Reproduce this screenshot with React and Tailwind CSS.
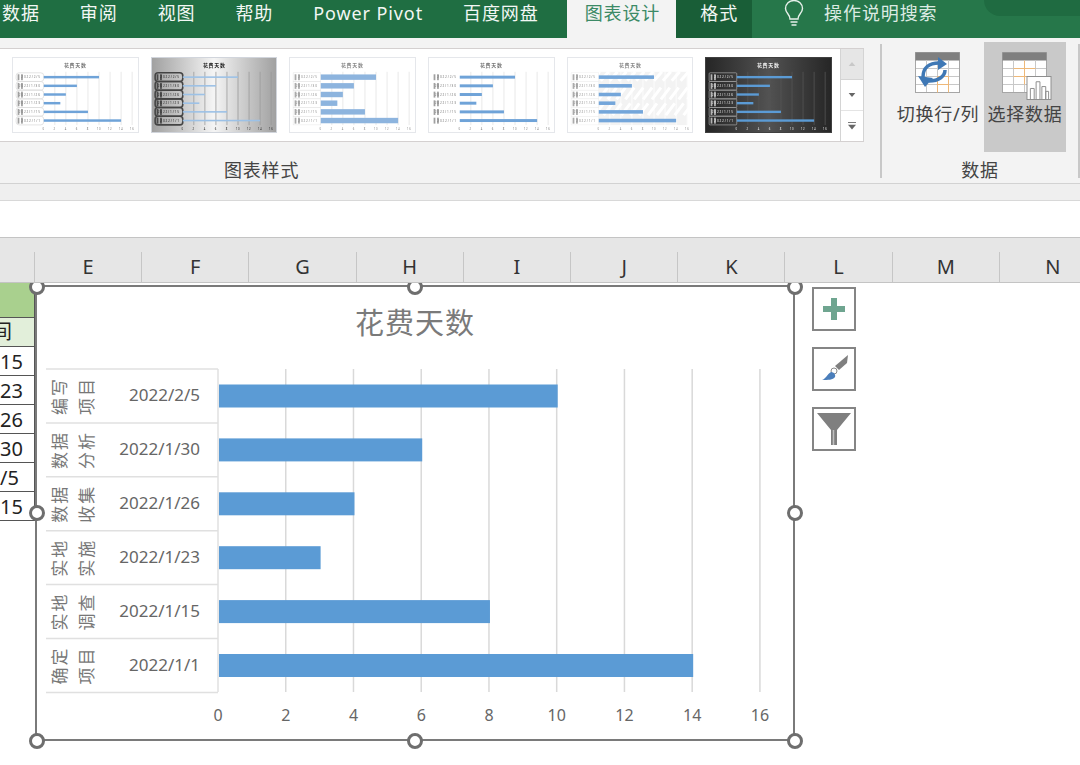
import React from "react";

const values = [10, 6, 4, 3, 8, 14];
const dates = ["2022/2/5", "2022/1/30", "2022/1/26", "2022/1/23", "2022/1/15", "2022/1/1"];
const cats = [
  ["编写", "项目"],
  ["数据", "分析"],
  ["数据", "收集"],
  ["实地", "实施"],
  ["实地", "调查"],
  ["确定", "项目"],
];
const columns = ["E", "F", "G", "H", "I", "J", "K", "L", "M", "N"];
const cells = ["15", "23", "26", "30", "/5", "15"];

const styles = [
  { box: "bg-white border-gray-200", bar: "#6fa3d8", h: 2.5, text: "#777", frame: "#ddd", grid: "#e3e3e3", lw: 0.8, rx: 3 },
  { box: "bg-linear-to-r from-neutral-400 via-neutral-100 to-neutral-400 border-gray-300", bar: "#9cc1e6", h: 1.6, text: "#222", frame: "#444", grid: "#999", lw: 1.6, rx: 3 },
  { box: "bg-white border-gray-200", bar: "#8db4de", h: 5.5, text: "#888", frame: "#e5e5e5", grid: "#e3e3e3", lw: 0.5, rx: 0 },
  { box: "bg-white border-gray-200", bar: "#6fa3d8", h: 3, text: "#777", frame: "#fff", grid: "#e3e3e3", lw: 0, rx: 0 },
  { box: "bg-white border-gray-200", bar: "#74a6da", h: 3.6, text: "#888", frame: "#eee", grid: "#fff", lw: 0.5, rx: 0, hatch: true },
  { box: "bg-linear-to-r from-neutral-800 via-neutral-600 to-neutral-800 border-neutral-700", bar: "#5b9bd5", h: 2.4, text: "#eee", frame: "#999", grid: "#555", lw: 0.8, rx: 1 },
];

function Thumb({ s }) {
  return (
    <div className={`flex-1 h-full border blur-[0.6px] ${s.box}`}>
      <svg viewBox="0 0 126 75" className="block w-full h-full">
        <text x="63" y="9" fontSize="5" fontWeight="700" textAnchor="middle" fill={s.text}>
          花费天数
        </text>
        {s.hatch && (
          <g>
            <rect x="31" y="14" width="90" height="54" fill="#f3f3f3" />
            {[0, 1, 2, 3, 4, 5, 6, 7, 8, 9, 10, 11].map((c) => (
              <path key={c} d={`M${32 + c * 9} 14l-8 9M${40 + c * 9} 30l-9 12M${36 + c * 9} 46l-9 12`} stroke="#fff" strokeWidth="3" />
            ))}
          </g>
        )}
        {[0, 1, 2, 3, 4, 5, 6, 7].map((g) => (
          <line key={g} x1={31 + (g + 1) * 11.2} x2={31 + (g + 1) * 11.2} y1="14" y2="68" stroke={s.grid} strokeWidth="0.8" />
        ))}
        {values.map((v, i) => (
          <g key={i}>
            <rect x="3" y={15 + i * 8.8} width="28" height="8.8" rx={s.rx} fill="none" stroke={s.frame} strokeWidth={s.lw} />
            <text x="28" y={20.5 + i * 8.8} fontSize="3.2" textAnchor="end" fill={s.text}>
              {dates[i]}
            </text>
            <rect x="4.5" y={16.5 + i * 8.8} width="1.8" height="6" fill={s.text} opacity="0.7" />
            <rect x="8" y={16.5 + i * 8.8} width="1.8" height="6" fill={s.text} opacity="0.7" />
            <rect x="31" y={19.4 - s.h / 2 + i * 8.8} width={v * 5.6} height={s.h} fill={s.bar} />
          </g>
        ))}
        {[0, 2, 4, 6, 8, 10, 12, 14, 16].map((t) => (
          <text key={t} x={31 + t * 5.6} y="72.5" fontSize="2.8" textAnchor="middle" fill={s.text}>
            {t}
          </text>
        ))}
      </svg>
    </div>
  );
}

function GridIcon({ swap }) {
  return (
    <svg viewBox="0 0 46 42" className={swap ? "w-11.5 h-10.5" : "w-full h-full"}>
      <rect x="0.5" y="0.5" width="44" height="40" fill="#fff" stroke="#a6a6a6" />
      <rect x="0.5" y="0.5" width="44" height="8" fill="#7f7f7f" />
      {[11.5, 22.5, 33.5].map((x) => (
        <line key={x} x1={x} x2={x} y1="8" y2="40" stroke="#c8c8c8" />
      ))}
      {[16.5, 24.5, 32.5].map((y) => (
        <line key={y} x1="1" x2="44" y1={y} y2={y} stroke="#c8c8c8" />
      ))}
      {swap ? (
        <g>
          <path d="M22.500 24.500V40.500M22.500 24.500H33.500M22.500 32.500H33.500M33.500 24.500V40.500" stroke="#eeb878" fill="none" />
          <g fill="#3f78b5">
            <path d="M8 25C8 16 14 11 24 11" fill="none" stroke="#3f78b5" strokeWidth="3.5" />
            <path d="M23 5L32 12L23 18Z" />
            <path d="M30 18C30 24 24 29 14 29" fill="none" stroke="#3f78b5" strokeWidth="3.5" />
            <path d="M3 24L18 26L10 35Z" />
          </g>
        </g>
      ) : (
        <path d="M22.500 8.500V32.500M11.500 16.500H33.500M11.500 24.500H33.500" stroke="#eeb878" fill="none" />
      )}
    </svg>
  );
}

function SelectDataIcon() {
  return (
    <div className="relative w-11.5 h-10.5">
      <GridIcon />
      <svg viewBox="0 0 26 25" className="absolute -right-1 -bottom-1.5 w-6.5 h-6">
        <rect x="0.5" y="0.5" width="25" height="24" fill="#fff" stroke="#8c8c8c" />
        <path d="M4 24V13h4v11M10 24V6h4v18M16 24V11h4v13M20 24v-8h3v8" fill="#fff" stroke="#8c8c8c" />
      </svg>
    </div>
  );
}

function Handle({ className }) {
  return <span className={`absolute size-4 rounded-full bg-white border-3 border-[#6e6e6e] ${className}`} />;
}

function ChartSvg() {
  const x = (v) => 218 + v * 33.87;
  return (
    <svg viewBox="37 287 756 452" className="block w-full h-full">
      <text x="415" y="334" fontSize="29" letterSpacing="1" textAnchor="middle" fill="#7a7a7a">
        花费天数
      </text>
      {[2, 4, 6, 8, 10, 12, 14, 16].map((t) => (
        <line key={t} x1={x(t)} x2={x(t)} y1="369" y2="692" stroke="#d9d9d9" strokeWidth="1.5" />
      ))}
      {[0, 1, 2, 3, 4, 5, 6].map((r) => (
        <line key={r} x1="46" x2="218" y1={369 + r * 53.9} y2={369 + r * 53.9} stroke="#e0e0e0" strokeWidth="1.5" />
      ))}
      <line x1="218" x2="218" y1="369" y2="692" stroke="#e0e0e0" strokeWidth="1.5" />
      {values.map((v, i) => {
        const cy = 396 + i * 53.9;
        return (
          <g key={i}>
            <rect x="219" y={cy - 11.5} width={v * 33.87} height="23" fill="#5b9bd5" />
            <text x="200" y={cy + 5} fontSize="17" textAnchor="end" fill="#666">
              {dates[i]}
            </text>
            <text transform={`translate(66 ${cy}) rotate(-90)`} fontSize="17" letterSpacing="2" textAnchor="middle" fill="#777">
              {cats[i][0]}
            </text>
            <text transform={`translate(93 ${cy}) rotate(-90)`} fontSize="17" letterSpacing="2" textAnchor="middle" fill="#777">
              {cats[i][1]}
            </text>
          </g>
        );
      })}
      {[0, 2, 4, 6, 8, 10, 12, 14, 16].map((t) => (
        <text key={t} x={x(t)} y="721" fontSize="16" textAnchor="middle" fill="#666">
          {t}
        </text>
      ))}
    </svg>
  );
}

export default function App() {
  return (
    <div className="w-[1080px] h-[765px] overflow-hidden flex flex-col bg-white font-['Noto_Sans','Noto_Sans_CJK_SC',sans-serif]">
      {/* Tabs */}
      <div className="relative flex h-9.5 shrink-0 bg-[#1f6e42] text-lg tracking-wider leading-6.5 text-[#f2f7f4]">
        <div className="pl-0.5 pr-5">数据</div>
        <div className="px-5">审阅</div>
        <div className="px-5">视图</div>
        <div className="px-5">帮助</div>
        <div className="px-5">Power Pivot</div>
        <div className="px-5">百度网盘</div>
        <div className="ml-2 pl-4.5 pr-4 bg-[#f3f3f3] text-[#3c8a66]">图表设计</div>
        <div className="pl-6 pr-3.5 bg-[#195e37]">格式</div>
        <div className="flex flex-1 bg-[#26774a] text-[#dcebe3] pl-8 gap-5">
          <svg viewBox="0 0 20 28" className="w-5 h-7 shrink-0" fill="none" stroke="#e6f0ea" strokeWidth="1.4">
            <path d="M6 19C6 14 1.5 13 1.5 8.5a8.5 8 0 0 1 17 0C18.500 13 14 14 14 19Z" />
            <path d="M6.500 22H13.500M7.500 25H12.500" />
          </svg>
          <span>操作说明搜索</span>
        </div>
        <div className="absolute right-0 top-0 w-24 h-4 rounded-bl-full bg-[#1f6b41]" />
      </div>

      {/* Ribbon */}
      <div className="flex h-36.5 shrink-0 bg-[#f3f3f3] border-b border-[#d2d2d2] text-[#444] tracking-wider">
        <div className="w-220 shrink-0 pt-2.5">
          <div className="flex w-216 h-23.5 bg-white border-y border-[#d4d0d0]">
            <div className="flex flex-1 gap-3 pl-3 pr-2 py-2">
              {styles.map((s, i) => (
                <Thumb key={i} s={s} />
              ))}
            </div>
            <div className="flex flex-col w-6 border-x border-[#d4d4d4]">
              <div className="flex flex-1 items-center justify-center bg-[#e6e6e6] border-b border-[#d4d4d4]">
                <svg viewBox="0 0 10 6" className="w-2 h-1">
                  <path d="M0 6L5 0L10 6Z" fill="#c8c8c8" />
                </svg>
              </div>
              <div className="flex flex-1 items-center justify-center border-b border-[#e4e4e4]">
                <svg viewBox="0 0 10 6" className="w-2 h-1">
                  <path d="M0 0L5 6L10 0Z" fill="#666" />
                </svg>
              </div>
              <div className="flex flex-1 items-center justify-center">
                <svg viewBox="0 0 10 9" className="w-2 h-2">
                  <path d="M0 0H10" stroke="#666" strokeWidth="1.2" />
                  <path d="M0 3L5 9L10 3Z" fill="#666" />
                </svg>
              </div>
            </div>
          </div>
          <div className="ml-56 mt-3.5 text-lg leading-7">图表样式</div>
        </div>

        <div className="self-start mt-1.5 w-50 h-33.5 border-x-2 border-[#c8c8c8]">
          <div className="flex -mt-0.5 ml-3.5 gap-1 h-27.5 text-lg leading-7 text-center">
            <div className="flex flex-col items-center w-21 pt-2.5">
              <GridIcon swap />
              <div className="mt-1.5 whitespace-nowrap">切换行/列</div>
            </div>
            <div className="flex flex-col items-center w-20.5 pt-2.5 bg-[#c9c9c9]">
              <SelectDataIcon />
              <div className="mt-1.5 whitespace-nowrap">选择数据</div>
            </div>
          </div>
          <div className="mt-1 text-center text-lg leading-7">数据</div>
        </div>
      </div>

      <div className="h-4.25 shrink-0 bg-[#efefef] border-b border-[#d8d8d8]" />
      <div className="h-9 shrink-0 bg-white" />

      {/* Column headers */}
      <div className="flex items-end h-11.5 shrink-0 overflow-hidden bg-[#e6e6e6] border-y border-[#c4c4c4] text-xl text-[#333]">
        <div className="w-8.5 shrink-0" />
        <div className="flex w-268 shrink-0">
          {columns.map((c) => (
            <div key={c} className="flex-1 h-7.5 leading-7.5 text-center border-l border-[#c6c6c6]">
              {c}
            </div>
          ))}
        </div>
      </div>

      {/* Sheet */}
      <div className="flex flex-1 items-start overflow-hidden">
        <div className="w-8.75 shrink-0 border-r border-[#555] text-xl text-[#222] overflow-hidden">
          <div className="h-8.5 bg-[#a9d08e]" />
          <div className="h-7.5 bg-[#e2efda] border-y border-[#555] leading-7">
            <span className="block -ml-2">间</span>
          </div>
          {cells.map((c, i) => (
            <div key={i} className={`h-7.25 text-right leading-7.5 border-b border-[#555] whitespace-nowrap ${c === "/5" ? "pr-5" : "pr-3"}`}>
              {c}
            </div>
          ))}
        </div>

        <div className="relative w-190 h-114 mt-0.5 shrink-0 bg-white border-2 border-[#7a7a7a]">
          <ChartSvg />
          <Handle className="-left-2 -top-2" />
          <Handle className="left-1/2 -translate-x-1/2 -top-2" />
          <Handle className="-right-2.5 -top-2" />
          <Handle className="-left-2 top-1/2 -translate-y-1/2" />
          <Handle className="-right-2.5 top-1/2 -translate-y-1/2" />
          <Handle className="-left-2 -bottom-2.5" />
          <Handle className="left-1/2 -translate-x-1/2 -bottom-2.5" />
          <Handle className="-right-2.5 -bottom-2.5" />
        </div>

        <div className="flex flex-col gap-4 ml-4.25 mt-1 shrink-0">
          <div className="flex items-center justify-center size-11 border-2 border-[#858585]">
            <svg viewBox="0 0 24 24" className="size-6">
              <path d="M9 1h6v8h8v6h-8v8H9v-8H1V9h8Z" fill="#6fa590" />
            </svg>
          </div>
          <div className="flex items-center justify-center size-11 border-2 border-[#858585]">
            <svg viewBox="0 0 28 28" className="size-7">
              <path d="M28 0L27 8L19 15L15 11Z" fill="#7f7f7f" />
              <circle cx="14" cy="16" r="3" fill="#fff" stroke="#8a8a8a" />
              <path d="M2 25C6 24 7 19 11 17C14 17 16 20 15 22C13 25 8 25 2 25Z" fill="#4a7ebb" />
            </svg>
          </div>
          <div className="flex items-center justify-center size-11 border-2 border-[#858585]">
            <svg viewBox="0 0 36 36" className="size-9">
              <path d="M1 2H35L21 19V34H15V19Z" fill="#7f7f7f" />
              <path d="M17.500 19V34" stroke="#c0c0c0" strokeWidth="1.5" />
            </svg>
          </div>
        </div>
      </div>
    </div>
  );
}
